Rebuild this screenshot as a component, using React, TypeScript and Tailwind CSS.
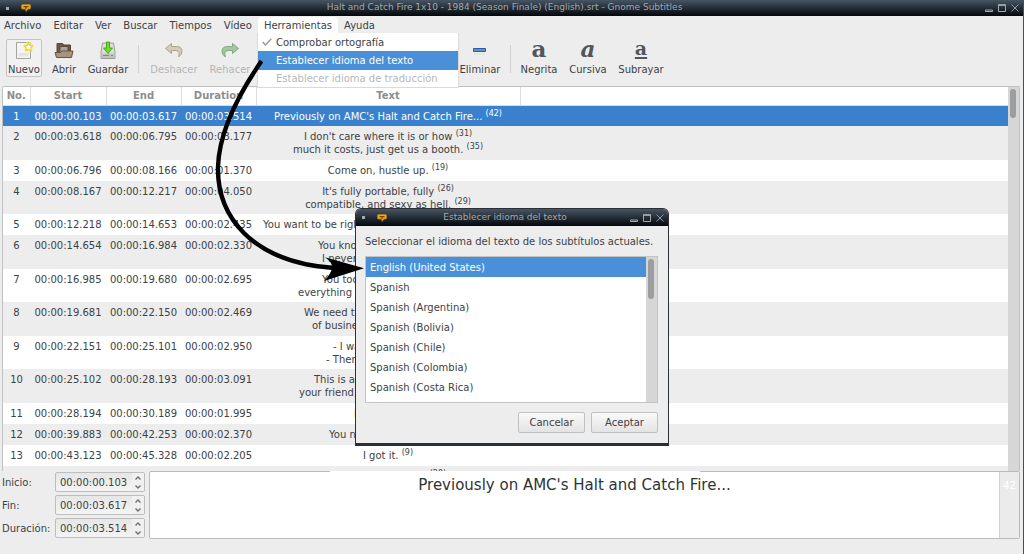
import { useState, type ReactNode } from "react";

type Line = {
    text: string
    count?: number
    width?: string
}

type Row = {
    start: string
    end: string
    duration: string
    lines: Line[]
    height: string
}

const rows: Row[] = [
    { start: "00:00:00.103", end: "00:00:03.617", duration: "00:00:03.514", height: "h-[21px]", lines: [{ text: "Previously on AMC's Halt and Catch Fire...", count: 42 }] },
    { start: "00:00:03.618", end: "00:00:06.795", duration: "00:00:03.177", height: "h-[34px]", lines: [{ text: "I don't care where it is or how", count: 31 }, { text: "much it costs, just get us a booth.", count: 35 }] },
    { start: "00:00:06.796", end: "00:00:08.166", duration: "00:00:01.370", height: "h-[21px]", lines: [{ text: "Come on, hustle up.", count: 19 }] },
    { start: "00:00:08.167", end: "00:00:12.217", duration: "00:00:04.050", height: "h-[33px]", lines: [{ text: "It's fully portable, fully", count: 26 }, { text: "compatible, and sexy as hell.", count: 29 }] },
    { start: "00:00:12.218", end: "00:00:14.653", duration: "00:00:02.435", height: "h-[21px]", lines: [{ text: "You want to be righ", width: "w-[250px]" }] },
    { start: "00:00:14.654", end: "00:00:16.984", duration: "00:00:02.330", height: "h-[34px]", lines: [{ text: "You kno", width: "w-[140px]" }, { text: "I never", width: "w-[132px]" }] },
    { start: "00:00:16.985", end: "00:00:19.680", duration: "00:00:02.695", height: "h-[33px]", lines: [{ text: "You too", width: "w-[132px]" }, { text: "everything t", width: "w-[180px]" }] },
    { start: "00:00:19.681", end: "00:00:22.150", duration: "00:00:02.469", height: "h-[34px]", lines: [{ text: "We need t", width: "w-[168px]" }, { text: "of busine", width: "w-[152px]" }] },
    { start: "00:00:22.151", end: "00:00:25.101", duration: "00:00:02.950", height: "h-[33px]", lines: [{ text: "- I wa", width: "w-[110px]" }, { text: "- Ther", width: "w-[124px]" }] },
    { start: "00:00:25.102", end: "00:00:28.193", duration: "00:00:03.091", height: "h-[34px]", lines: [{ text: "This is a", width: "w-[148px]" }, { text: "your friend,", width: "w-[178px]" }] },
    { start: "00:00:28.194", end: "00:00:30.189", duration: "00:00:01.995", height: "h-[21px]", lines: [{ text: "I", width: "w-[68px]" }] },
    { start: "00:00:39.883", end: "00:00:42.253", duration: "00:00:02.370", height: "h-[21px]", lines: [{ text: "You n", width: "w-[118px]" }] },
    { start: "00:00:43.123", end: "00:00:45.328", duration: "00:00:02.205", height: "h-[21px]", lines: [{ text: "I got it.", count: 9 }] },
    { start: "", end: "", duration: "", height: "h-[21px]", lines: [{ text: "I'll tell you later on.", count: 29 }] },
]

const languages = [
    "English (United States)",
    "Spanish",
    "Spanish (Argentina)",
    "Spanish (Bolivia)",
    "Spanish (Chile)",
    "Spanish (Colombia)",
    "Spanish (Costa Rica)",
]

const AppLogo = () => (
    <svg className="shrink-0" width="10" height="8" viewBox="0 0 10 8">
        <path d="M1.500 .5h7q1 0 1 1v2.500q0 1-1 1H7L5 7.500 4.500 5h-3q-1 0-1-1V1.500q0-1 1-1z" fill="#f2a81d" stroke="#c98205" strokeWidth=".6" />
        <path d="M2.500 2.700h5M4 4h2" stroke="#3b2a08" strokeWidth=".9" />
    </svg>
)

const WindowButtons = () => (
    <div className="flex items-center gap-[5px] text-[#a4a9ad]">
        <button aria-label="Minimizar">
            <svg width="8" height="8" viewBox="0 0 8 8"><path d="M.5 6h7v1.500h-7z" stroke="currentColor" fill="none" /></svg>
        </button>
        <button aria-label="Maximizar">
            <svg width="8" height="8" viewBox="0 0 8 8"><path d="M.5 1h7v6.500h-7z" stroke="currentColor" fill="none" /><path d="M0 1h8" stroke="currentColor" strokeWidth="1.600" /></svg>
        </button>
        <button aria-label="Cerrar">
            <svg width="8" height="8" viewBox="0 0 8 8"><path d="M.5 .5l7 7M7.500 .5l-7 7" stroke="#9298a0" fill="none" /></svg>
        </button>
    </div>
)

const TitleBar = ({ title, className }: { title: string, className: string }) => (
    <header className={`flex shrink-0 items-center bg-linear-to-b from-[#485563] via-[#252e38] to-[#04080c] text-[9px] text-[#a2a8ad] ${className}`}>
        <div className="flex w-12 items-center gap-3 pl-[6px]">
            <span className="size-[3px] bg-[#a4a9ad]"></span>
            <AppLogo />
        </div>
        <h1 className="flex-1 pr-6 text-center">{title}</h1>
        <WindowButtons />
    </header>
)

const MenuItem = ({ children, active }: { children: ReactNode, active?: boolean }) => (
    <button className={`h-4 rounded-t-sm px-[6px] ${active ? "bg-white" : ""}`}>{children}</button>
)

const ToolButton = ({ label, width, icon, disabled, pressed }: {
    label: string, width: string, icon: ReactNode, disabled?: boolean, pressed?: boolean
}) => (
    <button disabled={disabled}
        className={`flex h-[38px] flex-col items-center justify-between rounded-xs border leading-[13px] whitespace-nowrap
            disabled:text-[#b4b6b6] ${pressed ? "border-[#c3c4c4] bg-[#f1f1f1]" : "border-transparent"} ${width}`}
    >
        {icon}
        <span>{label}</span>
    </button>
)

const Separator = () => <div className="mt-[6px] h-7 w-px bg-[#cfd0d0]"></div>

const NewIcon = () => (
    <svg width="20" height="20" viewBox="0 0 20 20">
        <path d="M2.500 2.500h14v16h-14z" fill="#f4f4f2" stroke="#a3a49f" />
        <path d="M4.500 13h10v3.500h-10z" fill="#e4e4e1" />
        <circle cx="14.500" cy="7" r="5" fill="#fdf08a" opacity=".7" />
        <path d="M14.500 2.800l1.300 2.600 2.900.4-2 2.100.4 2.900-2.600-1.300-2.600 1.300.4-2.900-2-2.100 2.900-.4z" fill="#fffde0" stroke="#e8cf2a" strokeWidth="1.100" />
    </svg>
)

const OpenIcon = () => (
    <svg width="20" height="20" viewBox="0 0 20 20">
        <path d="M3 16.500V3.500h5.500L10 5h6.500v11.500z" fill="#6d5945" stroke="#564536" />
        <path d="M6 6.500h8v7H6z" fill="#a9a39a" stroke="#4f4336" strokeWidth=".8" />
        <path d="M1 12.500h5.500L8 11h11l-1.500 6.500h-15z" fill="#a89478" stroke="#665440" />
    </svg>
)

const SaveIcon = () => (
    <svg width="20" height="20" viewBox="0 0 20 20">
        <path d="M4.500 3h11l1.500 9v6.500H3V12z" fill="#dcdedb" stroke="#9a9c98" />
        <path d="M3.500 13.500h13V18h-13z" fill="#bfc1bd" />
        <path d="M5 15.500h6M13 15.500h2" stroke="#858783" />
        <path d="M8.500 2h3v6h3L10 13.500 5.500 8h3z" fill="#6fdc28" stroke="#459f10" strokeWidth=".9" />
    </svg>
)

const UndoIcon = () => (
    <svg width="20" height="20" viewBox="0 0 20 20">
        <path d="M1.500 8.500L7.500 3.500V6.500h5q5.500 0 5.500 5 0 3-3.500 5.500 1-3 .5-4.500T12 10.500H7.500v3z" fill="#d3cdb5" stroke="#aaa487" />
    </svg>
)

const RedoIcon = () => (
    <svg width="20" height="20" viewBox="0 0 20 20">
        <path d="M18.500 8.500L12.500 3.500V6.500h-5Q2 6.500 2 11.500q0 3 3.500 5.500-1-3-.5-4.500T8 10.500h4.500v3z" fill="#a3c6a0" stroke="#83a783" />
    </svg>
)

const RemoveIcon = () => (
    <svg width="20" height="20" viewBox="0 0 20 20">
        <path d="M3.500 8.500h12v3h-12z" fill="#5f8fc9" stroke="#2f5c9c" />
        <path d="M4 14h11" stroke="#dcdcdc" />
    </svg>
)

const LetterIcon = ({ style }: { style: string }) => (
    <span className={`flex h-5 items-center justify-center pb-1 font-['DejaVu_Serif'] leading-none font-bold text-[#50565a] ${style}`}>a</span>
)

const TimeField = ({ id, label, value }: { id: string, label: string, value: string }) => {
    const [time, setTime] = useState<string>(value)

    return (
        <div className="flex h-5 items-center">
            <label htmlFor={id} className="w-[53px]">{label}</label>
            <div className="flex h-5 w-[90px] rounded-xs border border-[#bcbebe] bg-linear-to-b from-[#e6e6e6] to-[#f4f4f4]">
                <input id={id} value={time} onChange={(e) => setTime(e.target.value)} className="w-[76px] pl-1 outline-none" />
                <div className="flex w-3 flex-col items-center justify-around bg-[#f0f0f0]">
                    <button aria-label={`Aumentar ${label}`}>
                        <svg width="6" height="4" viewBox="0 0 6 4"><path d="M.5 3.500L3 1l2.500 2.500" stroke="#6d7173" strokeWidth="1.400" fill="none" /></svg>
                    </button>
                    <button aria-label={`Reducir ${label}`}>
                        <svg width="6" height="4" viewBox="0 0 6 4"><path d="M.5 .5L3 3 5.500 .5" stroke="#6d7173" strokeWidth="1.400" fill="none" /></svg>
                    </button>
                </div>
            </div>
        </div>
    )
}

const ToolsMenu = () => (
    <div className="absolute top-[33px] left-[257px] z-10 flex w-[202px] flex-col border border-t-0 border-[#d9dada] bg-white">
        <button className="flex h-[18px] items-center">
            <svg className="mx-1" width="10" height="8" viewBox="0 0 10 8"><path d="M.7 4l2.800 3L9.300 .8" stroke="#9da0a1" strokeWidth="1.600" fill="none" /></svg>
            Comprobar ortografía
        </button>
        <button className="flex h-[19px] items-center bg-[#4a90d9] pl-[18px] text-white">Establecer idioma del texto</button>
        <button disabled className="flex h-[17px] items-center pl-[18px] text-[#b6b8b8]">Establecer idioma de traducción</button>
    </div>
)

const SubtitleTable = () => (
    <div className="mr-[3px] ml-[2px] flex min-h-0 flex-1 overflow-hidden rounded-t-xs border border-b-0 border-[#bfc0c0]">
        <div className="min-w-0 flex-1 overflow-hidden bg-white">
            <table className="w-full table-fixed">
                <colgroup>
                    <col className="w-[27px]" />
                    <col className="w-[76px]" />
                    <col className="w-[75px]" />
                    <col className="w-[75px]" />
                    <col className="w-[264px]" />
                    <col />
                </colgroup>
                <thead>
                    <tr className="h-[18px] text-[#8b8e8f]">
                        {["No.", "Start", "End", "Duration", "Text"].map((name) => (
                            <th key={name} className="border-r border-b border-[#dcdddd] p-0">{name}</th>
                        ))}
                        <th className="border-b border-[#dcdddd] p-0"></th>
                    </tr>
                </thead>
                <tbody>
                    {rows.map((row, i) => (
                        <tr key={i}
                            className={`${row.height} align-top leading-[13px] whitespace-nowrap
                                ${i === 0 ? "bg-[#3a81cd] text-white" : "odd:bg-white even:bg-[#ededed]"}`}
                        >
                            <td className="p-0 pt-1 text-center">{row.start && i + 1}</td>
                            <td className="p-0 pt-1 text-center">{row.start}</td>
                            <td className="p-0 pt-1 text-center">{row.end}</td>
                            <td className="p-0 pt-1 text-center">{row.duration}</td>
                            <td className="p-0 pt-1 text-center">
                                {row.lines.map(({ text, count, width }) => (
                                    <div key={text} className={width ? `mx-auto text-left ${width}` : ""}>
                                        {text} {count && <sup className="text-[8px]">({count})</sup>}
                                    </div>
                                ))}
                            </td>
                            <td className="p-0"></td>
                        </tr>
                    ))}
                </tbody>
            </table>
        </div>
        <div className="w-[11px] bg-[#d6d6d6] px-[2px] pt-[2px]">
            <div className="h-[29px] w-[6px] rounded-full bg-[#9c9d9e]"></div>
        </div>
    </div>
)

const LanguageDialog = () => {
    const [selected, setSelected] = useState<string>(languages[0])

    return (
        <div role="dialog" aria-label="Establecer idioma del texto"
            className="absolute top-[208px] left-[355px] z-10 w-[314px] rounded-t-md border border-b-3 border-[#2b3036] bg-[#ededed]"
        >
            <TitleBar title="Establecer idioma del texto" className="h-[17px] rounded-t-[5px] pr-1" />
            <div className="pt-2 pr-[10px] pb-[10px] pl-[9px]">
                <p className="leading-4 whitespace-nowrap">Seleccionar el idioma del texto de los subtítulos actuales.</p>
                <div className="mt-[6px] flex h-[147px] border border-[#c3c4c4] bg-white">
                    <ul role="listbox" aria-label="Idiomas" className="flex-1">
                        {languages.map((language) => (
                            <li key={language} role="option" aria-selected={language === selected}
                                onClick={() => setSelected(language)}
                                className="flex h-5 items-center pl-1 aria-selected:bg-[#4a90d9] aria-selected:text-white"
                            >
                                {language}
                            </li>
                        ))}
                    </ul>
                    <div className="w-[11px] bg-[#d6d6d6] px-[2px] pt-[2px]">
                        <div className="h-10 w-[6px] rounded-full bg-[#9c9d9e]"></div>
                    </div>
                </div>
                <div className="mt-[9px] flex justify-end gap-[6px]">
                    {["Cancelar", "Aceptar"].map((label) => (
                        <button key={label} className="h-[21px] w-[67px] rounded-xs border border-[#bfc1c1] bg-linear-to-b from-[#fafafa] to-[#e3e3e3]">
                            {label}
                        </button>
                    ))}
                </div>
            </div>
        </div>
    )
}

const Arrow = () => (
    <svg className="pointer-events-none absolute top-[50px] left-[200px] z-20" width="170" height="240" viewBox="200 50 170 240">
        <path d="M261.500 61C240 92 219 130 218 167C217 215 250 262 334 268" stroke="#000" strokeWidth="4.400" fill="none" />
        <path d="M364 268.300L325 257.300Q333 263 332 268Q331 274 324 281z" fill="#000" />
    </svg>
)

export default function App() {
    return (
        <div className="relative flex h-screen flex-col overflow-hidden border-r border-[#4b4d4f] bg-[#ededed] font-['DejaVu_Sans',sans-serif] text-[10px] text-[#3c4246]">
            <TitleBar title="Halt and Catch Fire 1x10 - 1984 (Season Finale) (English).srt - Gnome Subtitles" className="h-4 pr-1" />
            <nav className="-ml-0.5 flex h-[17px] items-end">
                <MenuItem>Archivo</MenuItem>
                <MenuItem>Editar</MenuItem>
                <MenuItem>Ver</MenuItem>
                <MenuItem>Buscar</MenuItem>
                <MenuItem>Tiempos</MenuItem>
                <MenuItem>Vídeo</MenuItem>
                <MenuItem active>Herramientas</MenuItem>
                <MenuItem>Ayuda</MenuItem>
            </nav>
            <div className="flex h-[53px] items-start gap-2 pt-[6px] pl-[6px]">
                <ToolButton label="Nuevo" width="w-9" icon={<NewIcon />} pressed />
                <ToolButton label="Abrir" width="w-7" icon={<OpenIcon />} />
                <ToolButton label="Guardar" width="w-11" icon={<SaveIcon />} />
                <Separator />
                <ToolButton label="Deshacer" width="w-[54px]" icon={<UndoIcon />} disabled />
                <ToolButton label="Rehacer" width="w-[42px]" icon={<RedoIcon />} disabled />
                <div className="w-[191px]"></div>
                <ToolButton label="Eliminar" width="w-11" icon={<RemoveIcon />} />
                <Separator />
                <ToolButton label="Negrita" width="w-10" icon={<LetterIcon style="text-[23px]" />} />
                <ToolButton label="Cursiva" width="w-[42px]" icon={<LetterIcon style="text-[23px] italic" />} />
                <ToolButton label="Subrayar" width="w-12" icon={<LetterIcon style="text-[19px] underline decoration-2 underline-offset-2" />} />
            </div>
            <SubtitleTable />
            <div className="flex h-[83px] gap-1 pr-[3px]">
                <div className="flex flex-col gap-[3px] pt-px pl-[2px]">
                    <TimeField id="inicio" label="Inicio:" value="00:00:00.103" />
                    <TimeField id="fin" label="Fin:" value="00:00:03.617" />
                    <TimeField id="duracion" label="Duración:" value="00:00:03.514" />
                </div>
                <div className="relative flex h-[68px] flex-1 rounded-xs border border-[#b9baba] bg-white">
                    <div className="absolute -top-px left-[180px] h-px w-[370px] bg-white"></div>
                    <textarea aria-label="Texto" defaultValue="Previously on AMC's Halt and Catch Fire..."
                        className="flex-1 resize-none pt-1 text-center text-[15px] leading-[18px] text-[#2e3436] outline-none" />
                    <div className="w-5 border-l border-[#cfd0d0] bg-[#ebebeb] pt-[6px] text-center text-white">42</div>
                </div>
            </div>
            <ToolsMenu />
            <LanguageDialog />
            <Arrow />
        </div>
    )
}
